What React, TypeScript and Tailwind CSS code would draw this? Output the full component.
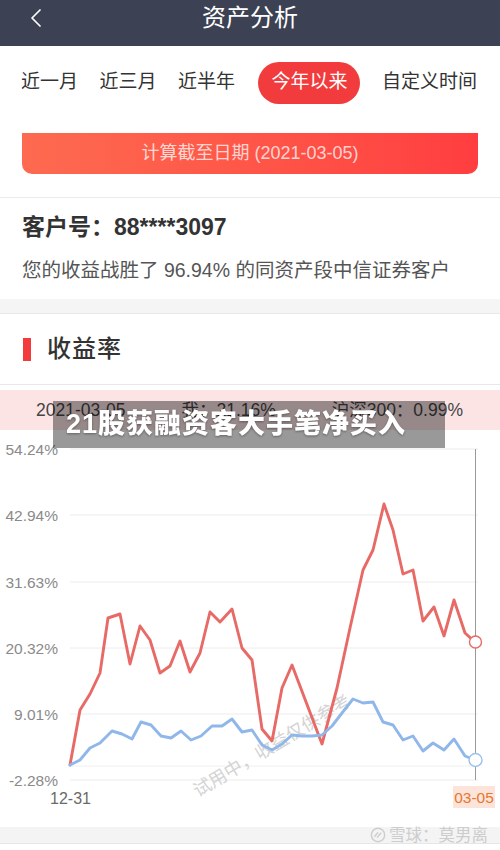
import { ChevronLeft } from "lucide-react";

const tabs = ["近一月", "近三月", "近半年", "今年以来", "自定义时间"];

// 图表坐标直接用页面坐标（viewBox 从 y=432 开始）
const red: [number, number][] = [
  [70, 767], [80, 712], [90, 696], [100, 675], [108, 620], [120, 616],
  [130, 666], [140, 628], [150, 642], [160, 675], [170, 668], [180, 643],
  [190, 674], [200, 655], [210, 614], [220, 624], [232, 611], [242, 650],
  [252, 662], [262, 731], [272, 743], [282, 690], [292, 667], [322, 746],
  [337, 690], [350, 630], [363, 572], [373, 552], [384, 506], [393, 532],
  [403, 576], [413, 572], [423, 623], [434, 609], [444, 638], [454, 602],
  [465, 635], [475, 644],
];

const blue: [number, number][] = [
  [70, 767], [80, 762], [90, 750], [100, 745], [112, 733], [122, 736],
  [132, 741], [141, 724], [151, 727], [161, 738], [171, 740], [181, 733],
  [191, 742], [201, 738], [212, 728], [222, 728], [232, 721], [242, 734],
  [252, 732], [262, 747], [272, 752], [282, 746], [292, 737], [302, 738],
  [312, 738], [322, 737], [332, 728], [342, 715], [353, 701], [363, 705],
  [373, 704], [383, 724], [393, 727], [403, 742], [413, 738], [423, 753],
  [433, 745], [444, 752], [454, 741], [465, 758], [475, 762],
];

const yLabels = [
  { v: "54.24%", y: 451 },
  { v: "42.94%", y: 517 },
  { v: "31.63%", y: 584 },
  { v: "20.32%", y: 650 },
  { v: "9.01%", y: 716 },
  { v: "-2.28%", y: 782 },
];

const toPoints = (pts: [number, number][]) => pts.map((p) => p.join(",")).join(" ");

function Chart() {
  return (
    <svg width="500" height="397" viewBox="0 432 500 397" className="block">
      {yLabels.map((l) => (
        <g key={l.v}>
          <line x1="70" x2="478" y1={l.y} y2={l.y} stroke="#ececec" strokeWidth="1" />
          <text x="58" y={l.y + 6} textAnchor="end" fontSize="15.5" fill="#8a8a8a">
            {l.v}
          </text>
        </g>
      ))}
      <line x1="70" x2="478" y1="768" y2="768" stroke="#f0f0f0" strokeWidth="1" />
      <line x1="475.5" x2="475.5" y1="451" y2="782" stroke="#9a9a9a" strokeWidth="1" />

      <text
        x="272"
        y="754"
        textAnchor="middle"
        fontSize="18"
        fill="#d4d4d4"
        transform="rotate(-31 272 748)"
      >
        试用中，收益仅供参考
      </text>

      <polyline
        points={toPoints(red)}
        fill="none"
        stroke="#e76a66"
        strokeWidth="2.9"
        strokeLinejoin="round"
        strokeLinecap="round"
      />
      <polyline
        points={toPoints(blue)}
        fill="none"
        stroke="#8fb7ea"
        strokeWidth="2.9"
        strokeLinejoin="round"
        strokeLinecap="round"
      />
      <circle cx="475.5" cy="644" r="6" fill="white" stroke="#e76a66" strokeWidth="1.4" />
      <circle cx="475.5" cy="762" r="6.5" fill="white" stroke="#9cc0ec" strokeWidth="1.4" />

      <text x="50" y="806" fontSize="16" fill="#6a6a6a">
        12-31
      </text>
      <rect x="453" y="788" width="42" height="22" fill="#fde4da" />
      <text x="474" y="805" textAnchor="middle" fontSize="15.5" fill="#e5782f">
        03-05
      </text>
    </svg>
  );
}

export default function App() {
  return (
    <div className="relative w-[500px] h-[850px] overflow-hidden bg-white text-[#333] font-['Liberation_Sans','Noto_Sans_CJK_SC',sans-serif]">
      {/* 顶部导航 */}
      <div className="relative h-[46px] bg-[#3c4253] flex items-center justify-center pb-[10px]">
        <ChevronLeft className="absolute left-[20px] top-[2px] text-white" size={32} strokeWidth={1.3} />
        <div className="text-white text-[24px] leading-[28px]">资产分析</div>
      </div>

      {/* 时间切换 */}
      <div className="h-[72px] flex items-center justify-between pl-[21px] pr-[23px] pt-[1px]">
        {tabs.map((t) =>
          t === "今年以来" ? (
            <div
              key={t}
              className="h-[42px] ml-[2px] px-[13px] rounded-full bg-[#f23b3d] text-white text-[19px] flex items-center"
            >
              {t}
            </div>
          ) : (
            <div key={t} className="text-[19px] text-[#333]">
              {t}
            </div>
          )
        )}
      </div>

      {/* 计算日期 */}
      <div className="px-[22px] pt-[15px] pb-[23px] border-b border-[#ebebeb]">
        <div className="h-[41px] rounded-b-[10px] bg-gradient-to-r from-[#fd6a50] to-[#ff3d40] flex items-center justify-center text-[18px] text-white/75">
          计算截至日期 (2021-03-05)
        </div>
      </div>

      {/* 客户信息 */}
      <div className="px-[22px] pt-[14px] pb-[14px]">
        <div className="text-[23px] leading-[30px] font-bold text-[#333]">客户号：88****3097</div>
        <div className="mt-[13px] text-[19.5px] leading-[30px] text-[#555]">
          您的收益战胜了 96.94% 的同资产段中信证券客户
        </div>
      </div>

      <div className="h-[15px] bg-[#f5f5f5] border-b border-[#e8e8e8]" />

      {/* 收益率 */}
      <div className="h-[71px] flex items-center gap-[16px] pl-[23px] border-b border-[#e8e8e8]">
        <div className="w-[8px] h-[23px] bg-[#f23b3d]" />
        <div className="text-[24px] font-medium text-[#333] tracking-[1px]">收益率</div>
      </div>
      <div className="h-[5px]" />
      <div className="h-[40px] bg-[#fce4e4] flex items-center justify-between pl-[36px] pr-[37px] text-[17.5px] text-[#444]">
        <span>2021-03-05</span>
        <span>我：21.16%</span>
        <span>沪深300：0.99%</span>
      </div>

      <Chart />

      <div className="h-[17px] bg-[#f4f4f4] border-b border-[#e6e6e6]" />

      {/* 覆盖标题 */}
      <div className="absolute left-[53px] top-[401px] w-[392px] h-[47px] bg-black/40 flex items-center pl-[13px]">
        <span className="text-white text-[27px] font-black tracking-[1px] leading-none drop-shadow-[0_1px_1px_rgba(0,0,0,0.35)]">
          21股获融资客大手笔净买入
        </span>
      </div>

      {/* 雪球水印 */}
      <div className="absolute right-[12px] top-[825px] flex items-center gap-[3px] text-[#cdcdcd]">
        <svg width="16" height="16" viewBox="0 0 18 18">
          <circle cx="9" cy="9" r="7.5" fill="none" stroke="#cdcdcd" strokeWidth="1.6" />
          <path d="M5 11 L9 6 M8 12 L12.5 6.5" stroke="#cdcdcd" strokeWidth="1.6" fill="none" />
        </svg>
        <span className="text-[16.5px] leading-[20px]">雪球：莫男离</span>
      </div>
    </div>
  );
}
